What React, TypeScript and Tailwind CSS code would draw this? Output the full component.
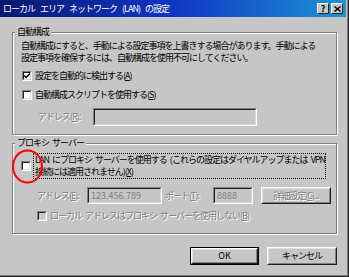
import React from "react";

const FONT = "font-['Noto_Sans_CJK_JP','Noto_Sans',sans-serif]";
const DIS = "text-[#808080] [text-shadow:1px_1px_0_#ffffff]";

function Sp({ w = "w-[3px]" }: { w?: string }) {
  return <span className={`inline-block ${w}`} />;
}

function Check({ checked = false, disabled = false }: { checked?: boolean; disabled?: boolean }) {
  return (
    <span className="relative block w-[10px] h-[10px] shrink-0 border border-t-[#808080] border-l-[#808080] border-b-white border-r-white">
      <span
        className={`relative block w-full h-full border border-t-[#202020] border-l-[#202020] border-b-[#d8d8d8] border-r-[#d8d8d8] ${
          disabled ? "bg-[#c6c6c6]" : "bg-white"
        }`}
      >
        {checked && (
          <svg className="absolute left-0 top-0 overflow-visible" width="6" height="6" viewBox="0 0 6 6">
            <path d="M0.3 2.4 L2.2 4.4 L5.8 0.6" fill="none" stroke="#000" strokeWidth="1.5" />
          </svg>
        )}
      </span>
    </span>
  );
}

function Field({ w, h, children }: { w: string; h: string; children?: React.ReactNode }) {
  return (
    <div className={`${w} ${h} shrink-0 border border-t-[#808080] border-l-[#808080] border-b-white border-r-white`}>
      <div className="h-full w-full border border-t-[#202020] border-l-[#202020] border-b-[#d8d8d8] border-r-[#d8d8d8] bg-[#c6c6c6] flex items-center pl-[2px] text-[#808080] tracking-[0px]">
        {children}
      </div>
    </div>
  );
}

function Button({ w, children, def = false }: { w: string; children: React.ReactNode; def?: boolean }) {
  const inner = (
    <div className="h-full w-full border border-t-white border-l-white border-b-[#202020] border-r-[#202020]">
      <div className="h-full w-full border border-t-[#e0e0e0] border-l-[#e0e0e0] border-b-[#808080] border-r-[#808080] flex items-center justify-center">
        {children}
      </div>
    </div>
  );
  if (def) {
    return <div className={`${w} h-[18px] border border-black shrink-0`}>{inner}</div>;
  }
  return <div className={`${w} h-[18px] shrink-0`}>{inner}</div>;
}

export default function App() {
  return (
    <div
      className={`${FONT} relative w-[349px] h-[277px] overflow-hidden bg-[#c6c6c6] text-black text-[9px] leading-[12px] tracking-[-1px] shadow-[inset_-1px_-1px_0_#202020,inset_-2px_-2px_0_#808080]`}
    >
      {/* title bar */}
      <div className="h-[17px] w-[346px] flex items-center justify-between pl-[3px] pr-[3px] bg-[linear-gradient(to_right,#081870,#1036c4_50%,#1c94d4)]">
        <span className="text-white pt-[1px] whitespace-nowrap">
          ローカル<Sp w="w-[5px]" />エリア<Sp w="w-[5px]" />ネットワーク<Sp w="w-[5px]" />(LAN)<Sp w="w-[5px]" />の設定
        </span>
        <div className="flex gap-[2px]">
          <div className="w-[12px] h-[11px] border border-t-white border-l-white border-b-[#202020] border-r-[#202020] bg-[#c6c6c6] flex items-center justify-center font-bold text-[9px] leading-[9px] tracking-[0px]">
            ?
          </div>
          <div className="w-[12px] h-[11px] border border-t-white border-l-white border-b-[#202020] border-r-[#202020] bg-[#c6c6c6] flex items-center justify-center">
            <svg width="7" height="6" viewBox="0 0 7 6">
              <path d="M0.5 0.5 L6.5 5.5 M6.5 0.5 L0.5 5.5" stroke="#000" strokeWidth="1.4" />
            </svg>
          </div>
        </div>
      </div>

      <div className="pl-[12px] flex flex-col">
        {/* group 1 */}
        <fieldset className="mt-[9px] w-[325px] border border-[#808080] shadow-[inset_1px_1px_0_#ffffff,1px_1px_0_#ffffff] pb-[8px]">
          <legend className="ml-[2px] px-[2px] bg-[#c6c6c6]">自動構成</legend>
          <div className="pl-[8px] pt-[2px] flex flex-col">
            <div className="whitespace-nowrap">自動構成にすると、手動による設定事項を上書きする場合があります。手動による</div>
            <div className="whitespace-nowrap">設定事項を確保するには、自動構成を使用不可にしてください。</div>
            <div className="mt-[6px] ml-[1px] h-[12px] flex items-center gap-[3px]">
              <Check checked />
              <span>
                設定を自動的に検出する(<u>A</u>)
              </span>
            </div>
            <div className="mt-[7px] ml-[1px] h-[12px] flex items-center gap-[3px]">
              <Check />
              <span>
                自動構成スクリプトを使用する(<u>S</u>)
              </span>
            </div>
            <div className="mt-[7px] ml-[17px] h-[18px] flex items-center">
              <span className={`${DIS} w-[55px]`}>
                アドレス(<u>R</u>):
              </span>
              <Field w="w-[164px]" h="h-[18px]" />
            </div>
          </div>
        </fieldset>

        {/* group 2 */}
        <fieldset className="mt-[2px] w-[325px] border border-[#808080] shadow-[inset_1px_1px_0_#ffffff,1px_1px_0_#ffffff] pb-[11px]">
          <legend className="ml-[2px] px-[2px] bg-[#c6c6c6]">
            プロキシ<Sp />サーバー
          </legend>
          <div className="pl-[8px] pt-[4px] flex flex-col">
            <div className="flex items-center gap-[2px]">
              <Check />
              <div className="w-[293px] border border-dotted border-black px-[1px] whitespace-nowrap">
                <div>
                  LAN<Sp />にプロキシ<Sp />サーバーを使用する<Sp />(これらの設定はダイヤルアップまたは<Sp />VPN
                </div>
                <div>
                  接続には適用されません)(<u>X</u>)
                </div>
              </div>
            </div>
            <div className="mt-[8px] ml-[16px] h-[17px] flex items-center">
              <span className={`${DIS} w-[50px]`}>
                アドレス(<u>E</u>):
              </span>
              <Field w="w-[75px]" h="h-[17px]">
                123.456.789
              </Field>
              <span className={`${DIS} ml-[3px] w-[48px]`}>
                ポート(<u>T</u>):
              </span>
              <Field w="w-[40px]" h="h-[17px]">
                8888
              </Field>
              <div className="ml-[8px] w-[70px] h-[17px] border border-t-white border-l-white border-b-[#202020] border-r-[#202020]">
                <div className="h-full w-full border border-t-[#e0e0e0] border-l-[#e0e0e0] border-b-[#808080] border-r-[#808080] flex items-center justify-center">
                  <span className={DIS}>
                    詳細設定(<u>C</u>)...
                  </span>
                </div>
              </div>
            </div>
            <div className="mt-[6px] ml-[16px] h-[12px] flex items-center gap-[3px]">
              <Check disabled />
              <span className={DIS}>
                ローカル<Sp />アドレスはプロキシ<Sp />サーバーを使用しない(<u>B</u>)
              </span>
            </div>
          </div>
        </fieldset>

        {/* buttons */}
        <div className="mt-[13px] w-[325px] flex justify-end gap-[8px]">
          <Button w="w-[69px]" def>
            <span className="tracking-[0px]">OK</span>
          </Button>
          <Button w="w-[70px]">キャンセル</Button>
        </div>
      </div>

      {/* red annotation circle */}
      <svg className="absolute left-0 top-0 pointer-events-none" width="349" height="277">
        <ellipse cx="27.5" cy="166.5" rx="14.5" ry="16" fill="none" stroke="#ff0000" strokeWidth="2" />
      </svg>
    </div>
  );
}
